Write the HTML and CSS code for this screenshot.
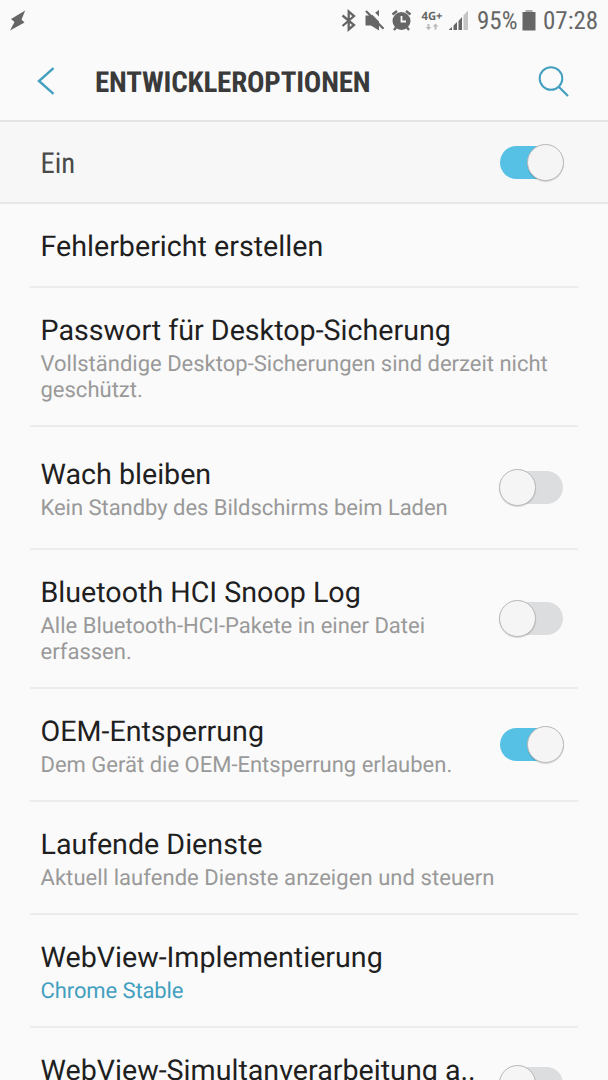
FILE: index.html
```html
<!DOCTYPE html>
<html lang="de">
<head>
<meta charset="utf-8">
<title>Entwickleroptionen</title>
<link rel="stylesheet" href="styles.css">
</head>
<body>
<div class="screen">
  <div class="status">
    <svg class="bolt" width="18" height="22" viewBox="0 0 18 22"><path d="M16.200 0.500L2 9L5.500 12L1 20.500L15.500 12.500L12.500 9.500Z" fill="#666"/></svg>
    <svg class="tray" width="142" height="42" viewBox="330 0 142 42">
      <path d="M342.500 15.500L354 25L348.700 29.500V11.500L354 16L342.500 26" fill="none" stroke="#666" stroke-width="2.300"/>
      <path d="M365.500 15.500H371L379 10V30.500L371 25.500H365.500Z" fill="#666"/>
      <path d="M368.500 8.500L386 26" stroke="#fafafa" stroke-width="3.500"/>
      <path d="M366 11L383.500 28.800" stroke="#666" stroke-width="2.200"/>
      <circle cx="401.500" cy="21" r="9" fill="#666"/>
      <path d="M392.500 14.500L397 11M406 11L410.500 14.500M396 27.500L394 30M407 27.500L409 30" stroke="#666" stroke-width="2.400"/>
      <path d="M401.500 16V21.500H406" fill="none" stroke="#fafafa" stroke-width="1.800"/>
      <text x="421.500" y="20" class="net" textLength="21" lengthAdjust="spacingAndGlyphs">4G+</text>
      <path d="M427.500 24H429.500V27H431.500L428.500 30L425.500 27H427.500ZM434.500 29.500H436.500V26.500H438.500L435.500 23.500L432.500 26.500H434.500Z" fill="#bbb"/>
      <path d="M448.500 30L452 27V30ZM453.500 30V25.500L457 22V30ZM458.500 30V21L462 17V30Z" fill="#666"/>
      <path d="M463.500 30V15.500L468 10.500V30Z" fill="#c4c4c4"/>
    </svg>
    <span class="cond percent">95%</span>
    <svg class="battery" width="14" height="21" viewBox="0 0 14 21"><path d="M3.500 0H10.500V2H3.500Z" fill="#aaa"/><path d="M.5 2H13.500V20.500H.5Z" fill="#666"/></svg>
    <span class="cond clock">07:28</span>
  </div>
  <header class="header">
    <svg class="back" width="18" height="28" viewBox="0 0 18 28"><path d="M16.500 1.200L2 14L16.500 26.800" fill="none" stroke="#439fc0" stroke-width="2.400"/></svg>
    <h1 class="cond heading">ENTWICKLEROPTIONEN</h1>
    <svg class="search" width="32" height="32" viewBox="0 0 32 32"><circle cx="13" cy="12.500" r="11.300" fill="none" stroke="#439fc0" stroke-width="2"/><path d="M21 21L30 30" stroke="#439fc0" stroke-width="2.200"/></svg>
  </header>
  <div class="master"><span class="cond state">Ein</span><span class="switch on"></span></div>
  <main class="list">
    <section class="row simple"><div class="text"><h2>Fehlerbericht erstellen</h2></div></section>
    <section class="row two"><div class="text"><h2>Passwort für Desktop-Sicherung</h2><p>Vollständige Desktop-Sicherungen sind derzeit nicht<br>geschützt.</p></div></section>
    <section class="row tall"><div class="text"><h2>Wach bleiben</h2><p class="tight">Kein Standby des Bildschirms beim Laden</p></div><span class="switch"></span></section>
    <section class="row two"><div class="text"><h2>Bluetooth HCI Snoop Log</h2><p>Alle Bluetooth-HCI-Pakete in einer Datei<br>erfassen.</p></div><span class="switch"></span></section>
    <section class="row"><div class="text"><h2>OEM-Entsperrung</h2><p>Dem Gerät die OEM-Entsperrung erlauben.</p></div><span class="switch on"></span></section>
    <section class="row"><div class="text"><h2>Laufende Dienste</h2><p class="wide">Aktuell laufende Dienste anzeigen und steuern</p></div></section>
    <section class="row"><div class="text"><h2>WebView-Implementierung</h2><p class="link">Chrome Stable</p></div></section>
    <section class="row last"><div class="text"><h2>WebView-Simultanverarbeitung a..</h2></div><span class="switch"></span></section>
  </main>
</div>
</body>
</html>
```
FILE: styles.css
```css
*, *::after { box-sizing: border-box; }
html, body { margin: 0; background: #fafafa; }
body { font-family: Roboto, "Liberation Sans", sans-serif; text-rendering: geometricPrecision; }
h1, h2, p { margin: 0; font-weight: 400; white-space: nowrap; }
svg { display: block; flex: none; }
.screen { width: 608px; height: 1080px; overflow: hidden; background: #fafafa; }
.cond { font-family: "Roboto Condensed", Roboto, sans-serif; font-stretch: 75%; white-space: nowrap; }
.status { display: flex; height: 42px; padding-left: 9px; color: #666; }
.bolt { margin-top: 10px; }
.tray { margin-left: 303px; }
.net { font: 700 11.5px "Open Sans", sans-serif; fill: #666; }
.percent, .clock { font-size: 25px; line-height: 44px; }
.percent { width: 41px; margin-left: 5px; }
.battery { margin: 10px 0 0 4px; }
.clock { margin-left: 7px; }
.header { display: flex; height: 80px; border-bottom: 2px solid #e5e5e5; padding-left: 37px; }
.back { margin-top: 25px; }
.heading { width: 276px; margin: 0 0 0 40px; font-size: 29px; font-weight: 700; line-height: 83px; letter-spacing: -.18px; color: #3a3a3a; }
.search { margin: 24px 0 0 167px; }
.master { display: flex; align-items: center; justify-content: space-between; height: 82px; padding: 0 45px 0 40.5px; background: #f7f7f7; border-bottom: 2px solid #e7e7e7; }
.state { padding-top: 3px; font-size: 28.7px; color: #4a4a4a; }
.switch { position: relative; flex: none; width: 63px; height: 33px; border-radius: 17px; background: #dcddde; }
.switch::after { content: ""; position: absolute; top: -2px; left: -1px; width: 37px; height: 37px; border: 1px solid #b8b8b8; border-radius: 50%; background: #f5f5f5; box-shadow: 0 1px 1px rgba(0,0,0,.15); }
.switch.on { background: #56c0e5; }
.switch.on::after { left: 27px; }
.list { padding: 0 30px; }
.row { display: flex; align-items: center; justify-content: space-between; height: 113px; padding: 0 15px 0 10.5px; border-bottom: 2px solid #ececec; }
.text { padding-top: 5px; }
.row.simple { height: 84px; }
.simple .text { padding-top: 2px; }
.row.two { height: 139px; }
.row.tall { height: 123px; }
.row.last { align-items: flex-start; height: 120px; padding-top: 21px; }
.last .switch { margin-top: 18px; }
h2 { font-size: 28.65px; line-height: 32px; color: #1f1f1f; }
p { margin-top: 6px; font-size: 22px; line-height: 26px; color: #999; }
.tight { letter-spacing: -.04px; }
.wide { letter-spacing: .06px; }
.link { color: #439fc0; letter-spacing: -.1px; }
```
